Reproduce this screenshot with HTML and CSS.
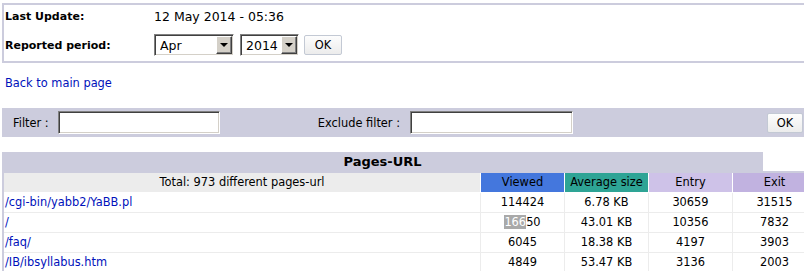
FILE: index.html
```html
<!DOCTYPE html>
<html lang="en">
<head>
  <meta charset="UTF-8">
  <title>Statistics - Pages-URL</title>
  <link rel="stylesheet" href="styles.css">
</head>
<body>
  <div class="page">
    <form class="period-box">
      <div class="period-row">
        <span class="label">Last Update:</span>
        <span class="update-date">12 May 2014 - 05:36</span>
      </div>
      <div class="period-row">
        <span class="label">Reported period:</span>
        <span class="period-controls">
          <label class="combo combo-month">
            <select name="month"><option>Apr</option></select>
            <span class="combo-btn"></span>
          </label>
          <label class="combo combo-year">
            <select name="year"><option>2014</option></select>
            <span class="combo-btn"></span>
          </label>
          <button type="submit" class="btn btn-ok">OK</button>
        </span>
      </div>
    </form>

    <a class="back-link" href="#">Back to main page</a>

    <form class="filter-bar">
      <span class="filter-label">Filter :</span>
      <input type="text" name="filter" class="filter-input">
      <span class="filter-label filter-label-exclude">Exclude filter :</span>
      <input type="text" name="filterex" class="filter-input filter-input-exclude">
      <button type="submit" class="btn btn-filter">OK</button>
    </form>

    <div class="pages">
      <div class="pages-head">
        <div class="pages-title">Pages-URL</div>
        <div class="pages-blank"></div>
      </div>
      <div class="pages-body">
        <table class="data">
          <tr>
            <th class="col-total">Total: 973 different pages-url</th>
            <th class="col-num col-viewed">Viewed</th>
            <th class="col-num col-size">Average size</th>
            <th class="col-num col-entry">Entry</th>
            <th class="col-num col-exit">Exit</th>
          </tr>
          <tr>
            <td class="url"><a href="#">/cgi-bin/yabb2/YaBB.pl</a></td>
            <td>114424</td>
            <td>6.78 KB</td>
            <td>30659</td>
            <td>31515</td>
          </tr>
          <tr>
            <td class="url"><a href="#">/</a></td>
            <td><span class="hilite">166</span>50</td>
            <td>43.01 KB</td>
            <td>10356</td>
            <td>7832</td>
          </tr>
          <tr>
            <td class="url"><a href="#">/faq/</a></td>
            <td>6045</td>
            <td>18.38 KB</td>
            <td>4197</td>
            <td>3903</td>
          </tr>
          <tr>
            <td class="url"><a href="#">/IB/ibsyllabus.htm</a></td>
            <td>4849</td>
            <td>53.47 KB</td>
            <td>3136</td>
            <td>2003</td>
          </tr>
        </table>
      </div>
    </div>
  </div>
</body>
</html>
```

FILE: styles.css
```css
html, body {
  overflow: hidden;
}

body {
  margin: 0;
  font: 11.4px "DejaVu Sans", Verdana, sans-serif;
  color: #000;
  background: #fff;
}

.page {
  width: 1087px;
  padding: 3px 0 0 2px;
}

/* period box */
.period-box {
  margin: 0;
  border: 2px solid #ccccdd;
  padding: 0 0 5px 1px;
}

.period-row {
  display: grid;
  grid-template-columns: 149px auto;
  align-items: center;
  height: 22px;
}

.period-row + .period-row {
  margin-top: 7px;
}

.label {
  font-size: 11px;
  font-weight: bold;
}

.update-date {
  font-size: 12.5px;
}

.period-controls {
  display: flex;
  align-items: center;
}

.combo {
  display: flex;
  box-sizing: border-box;
  height: 22px;
  padding: 1px;
  background: #fff;
  border: 1px solid;
  border-color: #808080 #fff #fff #808080;
  box-shadow: inset 1px 1px 0 #404040, inset -1px -1px 0 #d4d0c8;
}

.combo-month {
  width: 80px;
}

.combo-year {
  width: 59px;
  margin-left: 6px;
}

.combo select {
  -webkit-appearance: none;
  appearance: none;
  flex: 1;
  min-width: 0;
  height: 18px;
  margin: 0;
  padding: 0 0 0 4px;
  border: 0;
  background: transparent;
  font: 12.5px "DejaVu Sans", Verdana, sans-serif;
  color: #000;
  outline: none;
}

.combo-btn {
  flex: none;
  display: flex;
  align-items: center;
  justify-content: center;
  box-sizing: border-box;
  width: 16px;
  height: 18px;
  background: #d4d0c8;
  border: 1px solid;
  border-color: #fff #404040 #404040 #fff;
  box-shadow: inset -1px -1px 0 #808080;
}

.combo-btn::after {
  content: "";
  border-top: 4px solid #000;
  border-left: 4px solid transparent;
  border-right: 4px solid transparent;
}

.btn {
  padding: 0;
  font: 11.4px "DejaVu Sans", Verdana, sans-serif;
  color: #000;
  background: linear-gradient(#fdfdfd, #ececec);
  border: 1px solid #c3c9d4;
  border-radius: 2px;
}

.btn-ok {
  width: 38px;
  height: 20px;
  margin-left: 5px;
}

/* back link */
a {
  color: #0011bb;
  text-decoration: none;
}

.back-link {
  display: block;
  width: max-content;
  margin: 14px 0 0 3px;
  line-height: 13px;
}

/* filter bar */
.filter-bar {
  display: flex;
  align-items: center;
  margin: 18px 0 0;
  padding: 3px 0;
  background: #ccccdd;
}

.filter-label {
  box-sizing: border-box;
  width: 56px;
  padding-left: 11px;
}

.filter-label-exclude {
  width: 190px;
  padding: 0 10px 0 0;
  text-align: right;
}

.filter-input {
  box-sizing: border-box;
  width: 162px;
  height: 23px;
  margin: 0;
  padding: 0 3px;
  font: 11.4px "DejaVu Sans", Verdana, sans-serif;
  background: #fff;
  border: 1px solid;
  border-color: #808080 #fff #fff #808080;
  box-shadow: inset 1px 1px 0 #404040, inset -1px -1px 0 #d4d0c8;
  outline: none;
}

.filter-input-exclude {
  width: 163px;
}

.btn-filter {
  width: 36px;
  height: 20px;
  margin-left: 194px;
}

/* pages-url table */
.pages {
  margin-top: 15px;
}

.pages-head {
  display: flex;
}

.pages-title {
  width: 761px;
  padding: 2px 0;
  background: #ccccdd;
  font-size: 13px;
  font-weight: bold;
  line-height: 15px;
  text-align: center;
}

.pages-blank {
  flex: 1;
}

.pages-body {
  padding: 2px;
  background: #ccccdd;
}

.data {
  border-collapse: separate;
  border-spacing: 0;
  table-layout: fixed;
  background: #fff;
}

.data th,
.data td {
  box-sizing: border-box;
  padding: 3px 2px;
  line-height: 13px;
  font-weight: normal;
  text-align: center;
  white-space: nowrap;
}

.data th {
  border-right: 1px solid #fff;
  border-bottom: 1px solid #fff;
}

.data td {
  border-right: 1px solid #ececec;
  border-bottom: 1px solid #ececec;
}

.col-total {
  width: 477px;
  background: #ececec;
}

.col-num {
  width: 84px;
}

.col-viewed {
  background: #4477dd;
}

.col-size {
  background: #2ea495;
}

.col-entry {
  background: #cec2e8;
}

.col-exit {
  background: #c1b2e0;
}

.data td.url {
  padding-left: 1px;
  text-align: left;
}

.hilite {
  background: #a9a9a9;
  color: #fff;
}
```
